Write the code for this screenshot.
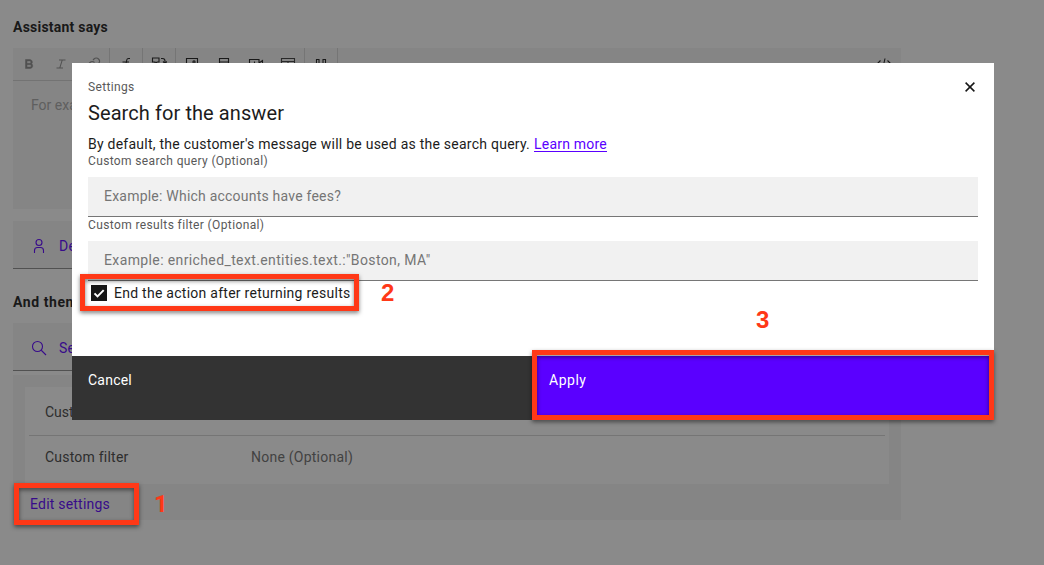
<script>
  // Tracks a label out so that it fills a known measure.
  function fit(node, width) {
    node.style.letterSpacing = '0px';
    const natural = node.getBoundingClientRect().width;
    node.style.letterSpacing = `${(width - natural) / node.textContent.length}px`;
  }
</script>

<div class="stage">
  <main class="page">
    <h2><span use:fit={95}>Assistant says</span></h2>
    <section class="editor">
      <div class="toolbar">
        <div class="group styles">
          <svg class="dim heavy" viewBox="0 0 32 32"><path d="M18.25 25H9V7h8.5a5.25 5.25 0 0 1 4 8.65A5.25 5.25 0 0 1 18.25 25ZM12 22h6.23a2.25 2.25 0 1 0 0-4.5H12Zm0-7.5h5.5a2.25 2.25 0 1 0 0-4.5H12Z" /></svg>
          <svg class="dim" viewBox="0 0 32 32"><path d="M25 9V7H12v2h5.14l-4.37 14H7v2h13v-2h-5.14l4.37-14H25Z" /></svg>
          <svg class="dim line" viewBox="0 0 32 32"><path d="M16 8l2-2a6.3 6.3 0 0 1 9 9l-5 5a6.3 6.3 0 0 1-9 0M16 25l-2 2a6.3 6.3 0 0 1-9-9l5-5a6.3 6.3 0 0 1 9 0" /></svg>
        </div>
        <div class="group one"><svg class="line" viewBox="0 0 32 32"><path d="M24 5h-3q-3 0-3.5 3L14 26q-.5 3-4 3M9 12h13" /></svg></div>
        <div class="group one"><svg class="line" viewBox="0 0 32 32"><path d="M3 4h13v8h-4l-4 4v-4H3ZM20 5h3q5 0 5 5v4M24 11l4 4 4-4M4 20v4q0 5 5 5h4" /></svg></div>
        <div class="group media">
          <svg class="line" viewBox="0 0 32 32"><path d="M5 5h22v22H5Z" /><circle cx="20" cy="12" r="2.2" /><path d="M5 22l7-7 9 9" /></svg>
          <svg class="line" viewBox="0 0 32 32"><path d="M7 5h18v22H7ZM7 12h18M7 19h18" /></svg>
          <svg class="line" viewBox="0 0 32 32"><path d="M3 7h19v18H3ZM22 14l7-5v15l-7-5M13 11v10M8 16h10" /></svg>
          <svg class="line soft" viewBox="0 0 32 32"><path d="M3 5h26v23H3ZM3 11h26M16 11v17M3 20h26" /></svg>
        </div>
        <div class="group one"><svg class="line" viewBox="0 0 32 32"><path d="M7 7h5v18H7ZM20 7h5v18h-5Z" /></svg></div>
        <svg class="line code" viewBox="0 0 32 32"><path d="M9 9l-7 7 7 7M23 9l7 7-7 7M18 5l-5 22" /></svg>
      </div>
      <p>For example</p>
    </section>
    <div class="action define">
      <svg class="line" viewBox="0 0 32 32"><circle cx="16" cy="9" r="6" /><path d="M7 30v-5q0-6 6-6h6q6 0 6 6v5" /></svg>
      <span>Define response</span>
    </div>
    <h2 class="then"><span use:fit={61}>And then</span></h2>
    <div class="action search">
      <svg class="line" viewBox="0 0 32 32"><circle cx="13" cy="13" r="10" /><path d="M20.5 20.5L30 30" /></svg>
      <span>Search for the answer</span>
    </div>
    <section class="summary">
      <div class="card">
        <div class="entry"><span class="name">Custom query</span></div>
        <div class="entry">
          <span class="name"><span use:fit={83}>Custom filter</span></span>
          <span class="value" use:fit={102}>None (Optional)</span>
        </div>
      </div>
      <span class="edit" use:fit={80}>Edit settings</span>
    </section>
  </main>
  <div class="overlay"></div>

  <div class="modal" role="dialog" aria-label="Settings">
    <div class="content">
      <header>
        <div>
          <div class="small"><span use:fit={46.5}>Settings</span></div>
          <h1><span use:fit={196}>Search for the answer</span></h1>
        </div>
        <svg class="close" viewBox="0 0 10 10"><path d="M.6.6l8.8 8.8M9.4.6L.6 9.4" /></svg>
      </header>
      <div class="intro"><span use:fit={442}>By default, the customer's message will be used as the search query.</span><a href="#top" use:fit={73}>Learn more</a></div>
      <div class="small label"><span use:fit={180}>Custom search query (Optional)</span></div>
      <div class="field"><span use:fit={237}>Example: Which accounts have fees?</span></div>
      <div class="small label second"><span use:fit={176}>Custom results filter (Optional)</span></div>
      <div class="field"><span use:fit={326.5}>Example: enriched_text.entities.text.:"Boston, MA"</span></div>
      <div class="check">
        <i><svg viewBox="0 0 16 16"><path d="M3.5 8.4l3 3 6.2-6.3" /></svg></i>
        <span use:fit={236.5}>End the action after returning results</span>
      </div>
    </div>
    <footer>
      <div class="cancel"><span use:fit={44}>Cancel</span></div>
      <div class="apply"><span use:fit={37.5}>Apply</span></div>
    </footer>
  </div>

  <div class="mark m1"></div>
  <div class="mark m2"></div>
  <div class="mark m3"></div>
  <b class="num n1">1</b>
  <b class="num n2">2</b>
  <b class="num n3">3</b>
</div>

<style>
  :global(body) { margin: 0; overflow: hidden; }
  .stage {
    position: relative; width: 1044px; height: 565px; overflow: hidden; background: #fff;
    font: 14px/18px "Roboto", "Liberation Sans", sans-serif; color: #1c1c1c;
  }
  .stage * { box-sizing: border-box; }
  span, a { white-space: nowrap; }
  svg { display: block; fill: currentColor; flex: none; }
  .line { fill: none; stroke: currentColor; stroke-width: 2.2; }

  .page { width: 888px; margin-left: 13px; padding-top: 18px; display: flex; flex-direction: column; }
  h2 { font-size: 14px; line-height: 18px; font-weight: 700; margin: 0 0 12px; }
  .editor { height: 161px; background: #f4f4f4; }
  .toolbar { height: 33px; display: flex; border-bottom: 1px solid #d0d0d0; }
  .toolbar svg { width: 16px; height: 16px; }
  .group { display: flex; align-items: center; height: 32px; border-right: 1px solid #d4d4d4; }
  .styles { width: 97px; padding-left: 8px; gap: 16px; }
  .one { width: 33px; justify-content: center; }
  .media { width: 129px; padding-left: 8px; gap: 16px; }
  .dim { color: #8b8b8b; }
  .heavy { stroke: currentColor; stroke-width: 1; }
  .soft { color: #3c3c3c; }
  .code { margin: 8px 9px 0 auto; }
  .editor p { margin: 15px 0 0 18px; color: #a8a8a8; }
  .action {
    height: 48px; margin-top: 12px; padding-left: 18px; display: flex; align-items: center; gap: 12px;
    background: #f4f4f4; border-bottom: 1px solid #8d8d8d; color: #5a00ff; letter-spacing: .2px;
  }
  .action svg { width: 16px; height: 16px; position: relative; top: 1px; }
  .action span { padding-top: 3px; }
  .then { margin: 24px 0 0; }
  .search { margin-top: 12px; }
  .summary { margin-top: 4px; height: 145px; padding: 12px; background: #f4f4f4; }
  .card { height: 97px; padding: 0 4px; background: #fff; }
  .entry { height: 49px; display: flex; align-items: center; padding: 2px 0 0 16px; }
  .entry + .entry { height: 44px; padding-top: 0; margin-top: -1px; }
  .entry:first-child { border-bottom: 1px solid #d4d4d4; }
  .name { width: 206px; color: #454545; }
  .value { color: #6f6f6f; }
  .edit { display: inline-block; margin: 11px 0 0 5px; color: #5a00ff; }
  .overlay { position: absolute; inset: 0; background: rgba(22, 22, 22, .5); }

  .modal { position: absolute; left: 72px; top: 63px; width: 922px; height: 357px; background: #fff; display: flex; flex-direction: column; }
  .content { height: 293px; padding: 16px 16px 0; }
  header { display: flex; justify-content: space-between; }
  .small { font-size: 12px; line-height: 16px; color: #595959; }
  h1 { margin: 5px 0 0; font-size: 20px; line-height: 26px; font-weight: 400; }
  .close { width: 10px; height: 10px; margin: 3px 3px 0 0; fill: none; stroke: #161616; stroke-width: 1.5; }
  .intro { display: flex; gap: 4px; margin-top: 9px; }
  .intro a { color: #5a00ff; text-decoration: underline; text-underline-offset: 2px; }
  .label { margin-bottom: 8px; }
  .second { margin-top: 0; }
  .field { height: 40px; padding: 10px 16px 0; background: #f1f1f1; border-bottom: 1px solid #767676; color: #757575; }
  .check { display: flex; gap: 7px; margin: 3px 0 0 3px; align-items: center; }
  .check i { width: 16px; height: 16px; background: #161616; }
  .check svg { width: 16px; height: 16px; fill: none; stroke: #fff; stroke-width: 2; }
  footer { display: flex; height: 64px; color: #fff; }
  footer div { flex: 1; padding: 15px 16px; }
  .cancel { background: #333; }
  .apply { background: #5a00ff; }

  .mark { position: absolute; border: 5px solid #ff3817; filter: drop-shadow(0 2px 2px rgba(0, 0, 0, .5)); }
  .m1 { left: 14px; top: 483px; width: 125px; height: 42px; }
  .m2 { left: 80px; top: 274px; width: 279px; height: 37px; }
  .m3 { left: 532px; top: 350px; width: 462px; height: 70px; }
  .num { position: absolute; font: 700 24px/28px "Liberation Sans", sans-serif; color: #ff3817; }
  .n1 { left: 154px; top: 490px; font-family: "Roboto", "Liberation Sans", sans-serif; }
  .n2 { left: 381px; top: 279px; }
  .n3 { left: 756px; top: 306px; }
</style>
